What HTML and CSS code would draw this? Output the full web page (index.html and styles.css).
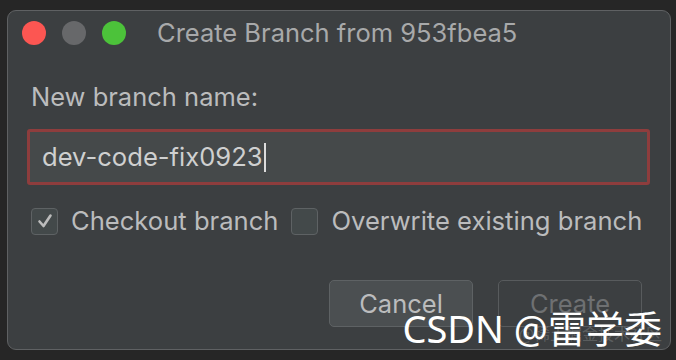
FILE: index.html
```html
<!DOCTYPE html>
<html lang="en">
<head>
    <meta charset="UTF-8">
    <title>Create Branch</title>
    <link rel="stylesheet" href="styles.css">
</head>
<body>

    <div class="dialog">
        <div class="titlebar">
            <div class="lights">
                <span class="light red"></span>
                <span class="light grey"></span>
                <span class="light green"></span>
            </div>
            <div class="title">Create Branch from 953fbea5</div>
        </div>

        <div class="content">
            <div class="label">New branch name:</div>
            <div class="field">
                <span class="field_text">dev-code-fix0923</span><span class="caret"></span>
            </div>

            <div class="options">
                <label class="option">
                    <span class="box checked">
                        <svg width="20" height="20" viewBox="0 0 20 20"><path d="M4.5 10.5 L8.5 15 L15.5 4.5" fill="none" stroke="#bcbcbc" stroke-width="2.6" stroke-linecap="round" stroke-linejoin="round"/></svg>
                    </span>
                    Checkout branch
                </label>
                <label class="option">
                    <span class="box"></span>
                    Overwrite existing branch
                </label>
            </div>

            <div class="buttons">
                <div class="button cancel">Cancel</div>
                <div class="button create">Create</div>
            </div>
        </div>

        <div class="watermark">
            <span class="faint">@稀土掘金技术社区</span>
            <span class="mark">CSDN @雷学委</span>
        </div>
    </div>

</body>
</html>
```

FILE: styles.css
```css
body {
    margin: 0;
    background-color: #262626;
    font-family: Inter, "Noto Sans", sans-serif;
}
.dialog {
    position: relative;
    box-sizing: border-box;
    width: 664px;
    height: 340px;
    margin: 10px 0 0 7px;
    background-color: #3c3f41;
    border: 1px solid #5f6163;
    border-radius: 9px;
}
.titlebar {
    display: flex;
    align-items: center;
    height: 44px;
    padding-left: 14px;
}
.lights {
    display: flex;
    gap: 16px;
}
.light {
    width: 24px;
    height: 24px;
    border-radius: 50%;
}
.red { background-color: #fc5652; }
.grey { background-color: #67686a; }
.green { background-color: #4cc23a; }
.title {
    margin-left: 31px;
    color: #a8a9aa;
    font-size: 25.5px;
    line-height: 30px;
}
.content {
    display: flex;
    flex-direction: column;
    padding: 29px 0 0 23px;
}
.label {
    color: #bbbcbd;
    font-size: 25.5px;
    line-height: 26px;
}
.field {
    display: flex;
    align-items: center;
    box-sizing: border-box;
    width: 623px;
    height: 56px;
    margin: 19px 0 0 -4px;
    padding-left: 12px;
    background-color: #45494a;
    border: 3px solid #8e3d3d;
    border-radius: 3px;
}
.field_text {
    color: #cfd0d0;
    font-size: 25.6px;
    line-height: 30px;
}
.caret {
    width: 2px;
    height: 29px;
    margin-left: 1px;
    background-color: #dcdcdc;
}
.options {
    display: flex;
    gap: 13px;
    margin-top: 22px;
}
.option {
    display: flex;
    align-items: center;
    gap: 13px;
    color: #bbbcbd;
    font-size: 25.6px;
    line-height: 28px;
}
.box {
    display: flex;
    align-items: center;
    justify-content: center;
    box-sizing: border-box;
    width: 27px;
    height: 27px;
    background-color: #43494a;
    border: 1px solid #5e6264;
    border-radius: 4px;
}
.buttons {
    display: flex;
    justify-content: flex-end;
    gap: 25px;
    margin: 45px 28px 0 0;
}
.button {
    box-sizing: border-box;
    width: 144px;
    height: 47px;
    border-radius: 5px;
    font-size: 25.5px;
    line-height: 45px;
    text-align: center;
}
.cancel {
    color: #bbbcbd;
    background-color: #4b4f51;
    border: 1px solid #5e6264;
}
.create {
    color: #6e7072;
    background-color: #3c3f41;
    border: 1px solid #585b5d;
}
.watermark {
    position: absolute;
    right: 8px;
    bottom: -4px;
    width: 266px;
    height: 50px;
}
.faint {
    position: absolute;
    right: 0;
    bottom: 8px;
    color: rgba(255, 255, 255, 0.18);
    font-family: "Noto Sans CJK SC", sans-serif;
    font-size: 16px;
}
.mark {
    position: absolute;
    right: 0;
    bottom: 0;
    color: #ffffff;
    font-family: "Noto Sans", "Noto Sans CJK SC", sans-serif;
    font-size: 38px;
    line-height: 50px;
    white-space: nowrap;
}
```
